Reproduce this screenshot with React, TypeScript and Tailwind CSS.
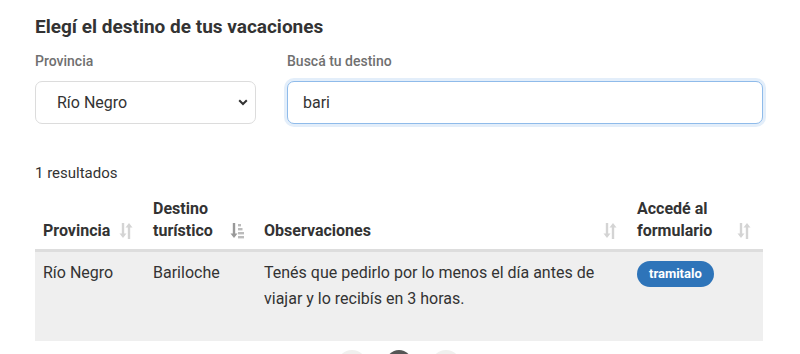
import React from "react";

function SortIcon({ active = false }: { active?: boolean }) {
  if (active) {
    return (
      <svg width="14" height="18" viewBox="0 0 14 18" className="shrink-0">
        <path d="M4 1v13" stroke="#999" strokeWidth="2.4" />
        <path d="M0.5 11.5L4 16l3.5-4.5z" fill="#999" />
        <rect x="8" y="2" width="3" height="2.4" fill="#bbb" />
        <rect x="8" y="6" width="4.5" height="2.4" fill="#bbb" />
        <rect x="8" y="10" width="6" height="2.4" fill="#bbb" />
        <rect x="8" y="14" width="6" height="2.4" fill="#bbb" />
      </svg>
    );
  }
  return (
    <svg width="14" height="18" viewBox="0 0 14 18" className="shrink-0">
      <path d="M4 1v13" stroke="#d4d4d4" strokeWidth="2.4" />
      <path d="M0.5 11.5L4 16l3.5-4.5z" fill="#d4d4d4" />
      <path d="M10 4v13" stroke="#d4d4d4" strokeWidth="2.4" />
      <path d="M6.5 5.5L10 1l3.5 4.5z" fill="#d4d4d4" />
    </svg>
  );
}

const rows = [
  {
    provincia: "Río Negro",
    destino: "Bariloche",
    obs: "Tenés que pedirlo por lo menos el día antes de viajar y lo recibís en 3 horas.",
  },
];

const headers = [
  { t: ["Provincia"], w: "w-[110px]", active: false },
  { t: ["Destino", "turístico"], w: "w-[111px]", active: true },
  { t: ["Observaciones"], w: "w-[373px]", active: false },
  { t: ["Accedé al", "formulario"], w: "w-[134px]", active: false },
];

export default function App() {
  return (
    <div
      className="w-[800px] h-[354px] overflow-hidden bg-white text-[#333]"
      style={{ fontFamily: '"Roboto", "Noto Sans", sans-serif' }}
    >
      <div className="pl-[35px] pr-[37px] pt-[14px]">
        <h2 className="text-[19px] font-bold leading-[26px]">Elegí el destino de tus vacaciones</h2>

        <div className="flex gap-[31px] mt-[11px]">
          <div className="w-[221px]">
            <label className="block text-[14px] font-medium text-[#707070] leading-[20px]">Provincia</label>
            <div className="relative mt-[10px]">
              <select className="w-full h-[43px] appearance-none rounded-[7px] border border-[#dcdcdc] bg-white pl-[21px] text-[16px] text-[#333] outline-none">
                <option>Río Negro</option>
              </select>
              <svg className="absolute right-[8px] top-[18px]" width="10" height="7" viewBox="0 0 10 7">
                <path d="M1.2 1.2L5 5l3.8-3.8" stroke="#333" strokeWidth="2" fill="none" />
              </svg>
            </div>
          </div>
          <div className="flex-1">
            <label className="block text-[14px] font-medium text-[#707070] leading-[20px]">Buscá tu destino</label>
            <input
              readOnly
              value="bari"
              className="mt-[10px] w-full h-[43px] rounded-[7px] border border-[#8fbbea] bg-white px-[15px] text-[16px] text-[#333] outline-none shadow-[0_0_0_3px_rgba(143,187,234,0.25)]"
            />
          </div>
        </div>

        <p className="mt-[39px] text-[15px] leading-[20px]">1 resultados</p>

        <table className="mt-[15px] w-[728px] border-collapse">
          <thead>
            <tr className="border-b-[3px] border-[#dddddd]">
              {headers.map((h, i) => (
                <th key={i} className={`${h.w} px-[8px] pb-[7px] align-bottom text-left`}>
                  <div className="flex items-end justify-between gap-1">
                    <span className="text-[16px] font-bold leading-[22px]">
                      {h.t.map((l, j) => (
                        <span key={j} className="block">
                          {l}
                        </span>
                      ))}
                    </span>
                    <span className="pb-[2px] pr-[4px]">
                      <SortIcon active={h.active} />
                    </span>
                  </div>
                </th>
              ))}
            </tr>
          </thead>
          <tbody>
            {rows.map((r) => (
              <tr key={r.destino} className="bg-[#efefef] align-top">
                <td className="px-[8px] pt-[8px] pb-[55px] text-[16px] leading-[26px]">{r.provincia}</td>
                <td className="px-[8px] pt-[8px] text-[16px] leading-[26px]">{r.destino}</td>
                <td className="px-[8px] pt-[8px] pr-[20px] text-[16px] leading-[26px]">{r.obs}</td>
                <td className="px-[8px] pt-[9px]">
                  <span className="inline-block rounded-full bg-[#2e74b9] px-[12px] text-[13px] font-bold leading-[26px] text-white">
                    tramitalo
                  </span>
                </td>
              </tr>
            ))}
          </tbody>
        </table>

        <div className="flex justify-center items-start gap-[19px] mt-[9px]">
          <span className="w-[30px] h-[30px] rounded-full bg-[#f0f0ee]" />
          <span className="w-[26px] h-[26px] rounded-full bg-[#555]" />
          <span className="w-[30px] h-[30px] rounded-full bg-[#f0f0ee]" />
        </div>
      </div>
    </div>
  );
}
